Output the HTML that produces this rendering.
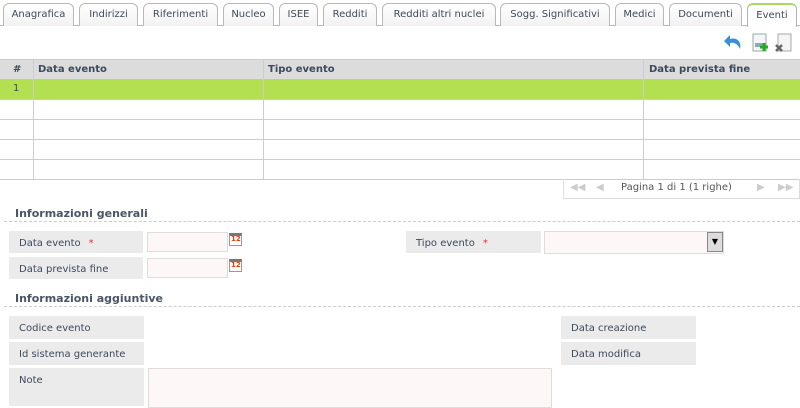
<!DOCTYPE html>
<html><head><style>
*{margin:0;padding:0;box-sizing:border-box}
body{width:800px;height:406px;overflow:hidden;background:#fff;font-family:"DejaVu Sans","Liberation Sans",sans-serif;font-size:10px;color:#3c4a5c;position:relative}
.a{position:absolute}
.tab{position:absolute;top:3px;height:23px;border:1px solid #b8b8b8;border-bottom:none;border-radius:6px 6px 0 0;background:linear-gradient(#fff,#f2f2f2);text-align:center;line-height:22px;font-size:10px;color:#3c4a5c}
.lbl{position:absolute;background:#ebebeb;padding-left:10px;line-height:25px;height:22px}
.inp{position:absolute;background:#fdf7f7;border:1px solid #ddd}
.cell{position:absolute;border-right:1px solid #ccc}
.dash{position:absolute;left:4px;right:0;border-top:1px dashed #ccc}
.h{position:absolute;left:15px;font-weight:bold;font-size:11px;color:#4a5666}
.cal{position:absolute;width:13px;height:13px;background:#fff;border:1px solid #999;border-top:3px solid #777}
.cal span{position:absolute;left:1px;top:-1px;font-size:7px;color:#e04010;font-weight:bold}
.star{color:#e03040;margin-left:8px}
</style></head><body>
<div class="a" style="left:0;top:25px;width:800px;border-top:1px solid #b8b8b8"></div>
<div class="tab" style="left:3px;width:71px">Anagrafica</div>
<div class="tab" style="left:79px;width:59px">Indirizzi</div>
<div class="tab" style="left:143px;width:75px">Riferimenti</div>
<div class="tab" style="left:223px;width:51px">Nucleo</div>
<div class="tab" style="left:279px;width:39px">ISEE</div>
<div class="tab" style="left:323px;width:54px">Redditi</div>
<div class="tab" style="left:382px;width:114px">Redditi altri nuclei</div>
<div class="tab" style="left:500px;width:110px">Sogg. Significativi</div>
<div class="tab" style="left:615px;width:49px">Medici</div>
<div class="tab" style="left:669px;width:73px">Documenti</div>
<div class="tab" style="left:747px;width:50px;height:24px;background:#fff;border-color:#b0b0b0;border-top:2px solid #a8d860">Eventi</div>

<svg class="a" style="left:720px;top:31px" width="80" height="24" viewBox="0 0 80 24">
<path d="M4 10 L10 4 L10 8 C16 6 22 10 20 18 C18 13 14 11 10 12 L10 16 Z" fill="#3a8fd8"/>
<rect x="33" y="3" width="13" height="17" fill="#f4f6fa" stroke="#9aa"/>
<rect x="35" y="12" width="9" height="4" fill="#8ab"/>
<path d="M40 16h8M44 12v8" stroke="#2a2" stroke-width="3"/>
<rect x="58" y="3" width="13" height="17" fill="#f4f4f4" stroke="#aaa"/>
<path d="M56 14l6 6M62 14l-6 6" stroke="#666" stroke-width="2.5"/>
</svg>

<div class="a" style="left:0;top:59px;width:800px;height:120px;border-top:1px solid #ccc">
<div class="a" style="left:0;top:0;width:800px;height:19px;background:#dcdcdc;font-weight:bold;line-height:19px">
<span class="a" style="left:13px">#</span><span class="a" style="left:38px">Data evento</span><span class="a" style="left:268px">Tipo evento</span><span class="a" style="left:649px">Data prevista fine</span></div>
<div class="a" style="left:0;top:19px;width:800px;height:20px;background:#b2e050;line-height:20px"><span class="a" style="left:13px">1</span></div>
<div class="a" style="left:0;top:39px;width:800px;border-top:1px solid #ccc"></div>
<div class="a" style="left:0;top:59px;width:800px;border-top:1px solid #ccc"></div>
<div class="a" style="left:0;top:79px;width:800px;border-top:1px solid #ccc"></div>
<div class="a" style="left:0;top:99px;width:800px;border-top:1px solid #ccc"></div>
<div class="a" style="left:0;top:119px;width:800px;border-top:1px solid #ccc"></div>
<div class="cell" style="left:0;top:0;width:34px;height:120px"></div>
<div class="cell" style="left:34px;top:0;width:230px;height:120px"></div>
<div class="cell" style="left:264px;top:0;width:380px;height:120px"></div>
</div>
<div class="a" style="left:563px;top:179px;width:237px;height:20px;border:1px solid #ddd;border-top:none;line-height:18px;color:#555">
<span class="a" style="left:6px;color:#ccc">◀◀</span><span class="a" style="left:32px;color:#ccc">◀</span><span class="a" style="left:57px">Pagina 1 di 1 (1 righe)</span><span class="a" style="left:193px;color:#ccc">▶</span><span class="a" style="left:214px;color:#ccc">▶▶</span></div>

<div class="h" style="top:207px">Informazioni generali</div>
<div class="dash" style="top:221px"></div>
<div class="lbl" style="left:9px;top:231px;width:134px">Data evento<span class="star">*</span></div>
<div class="inp" style="left:147px;top:232px;width:81px;height:20px"></div>
<div class="cal" style="left:229px;top:233px"><span>12</span></div>
<div class="lbl" style="left:9px;top:257px;width:134px">Data prevista fine</div>
<div class="inp" style="left:147px;top:258px;width:81px;height:20px"></div>
<div class="cal" style="left:229px;top:259px"><span>12</span></div>
<div class="lbl" style="left:406px;top:231px;width:135px">Tipo evento<span class="star">*</span></div>
<div class="inp" style="left:544px;top:231px;width:180px;height:23px"></div>
<div class="a" style="left:707px;top:232px;width:16px;height:20px;background:#ddd;border:1px solid #888;font-size:8px;text-align:center;line-height:18px;color:#000">▼</div>

<div class="h" style="top:292px">Informazioni aggiuntive</div>
<div class="dash" style="top:306px"></div>
<div class="lbl" style="left:9px;top:316px;width:135px;height:23px">Codice evento</div>
<div class="lbl" style="left:9px;top:342px;width:135px;height:23px">Id sistema generante</div>
<div class="lbl" style="left:9px;top:368px;width:135px;height:38px">Note</div>
<div class="inp" style="left:148px;top:368px;width:404px;height:40px"></div>
<div class="lbl" style="left:561px;top:316px;width:135px;height:23px">Data creazione</div>
<div class="lbl" style="left:561px;top:342px;width:135px;height:23px">Data modifica</div>
</body></html>
